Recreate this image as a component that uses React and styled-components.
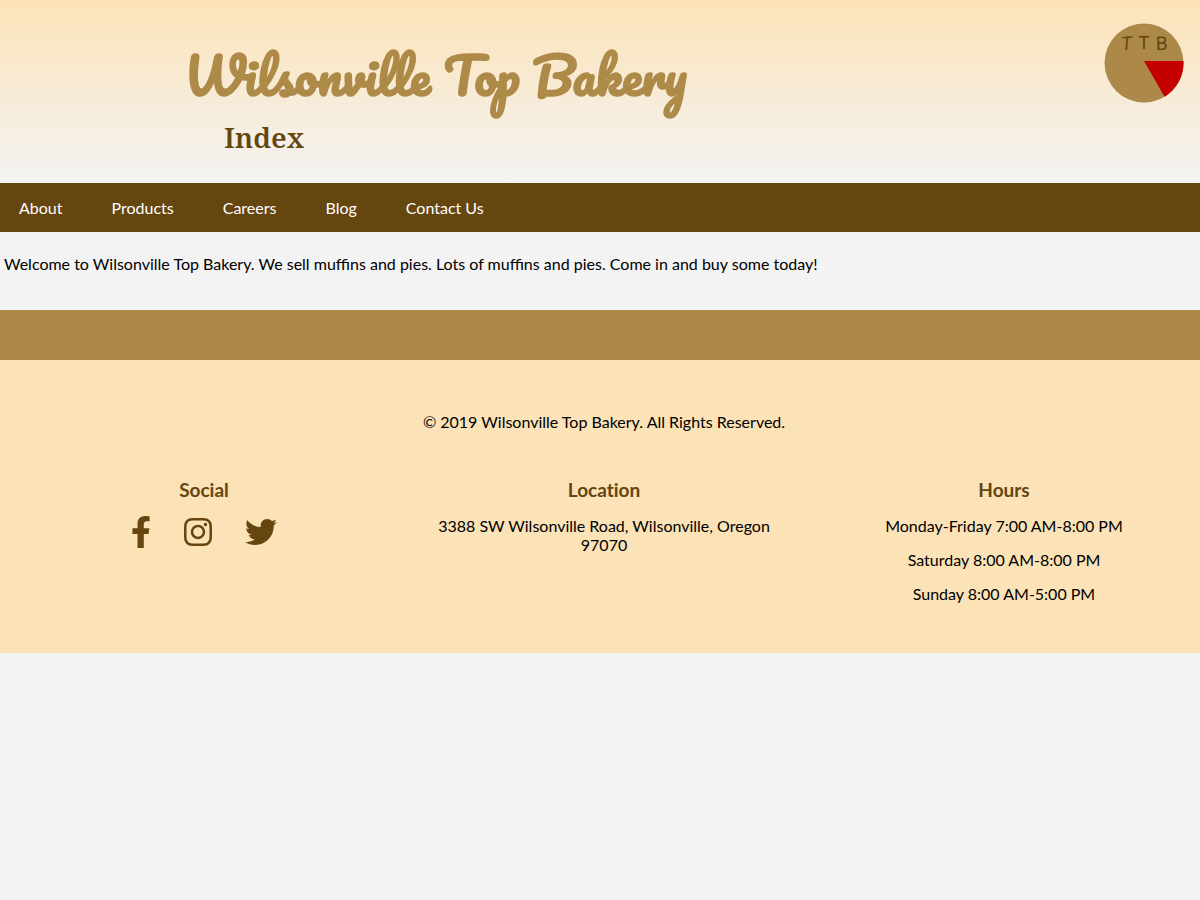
import React from "react";
import styled, { createGlobalStyle } from "styled-components";
import { FaFacebookF, FaInstagram, FaTwitter } from "react-icons/fa";

const GlobalStyle = createGlobalStyle`
  * {
    box-sizing: border-box;
  }
  body {
    margin: 0;
    background: #f3f3f3;
    color: #000;
    font-family: Lato, sans-serif;
    font-size: 16px;
    line-height: 19px;
  }
  h1, h2, h3, p, ul {
    margin: 0;
  }
`;

const Header = styled.header`
  display: flex;
  justify-content: space-between;
  align-items: flex-start;
  padding: 23px 16px 26px 184px;
  background: linear-gradient(#fce3b8, #f3f3f3);
`;

const Title = styled.h1`
  padding-top: 9px;
  color: #ae8a49;
  font-family: Pacifico, cursive;
  font-size: 50px;
  font-weight: 700;
  line-height: 86px;
`;

const PageName = styled.h2`
  padding-left: 40px;
  color: #65460f;
  font-family: "Noto Serif", "DejaVu Serif", serif;
  font-size: 28px;
  font-weight: 600;
  line-height: 39px;
`;

const Logo = styled.svg`
  flex: none;
  width: 80px;
  height: 80px;
`;

const LogoLetter = styled.text`
  fill: #65460f;
  font-family: Roboto, sans-serif;
  font-size: 19px;
  text-anchor: middle;
  font-style: ${(p) => (p.$slanted ? "italic" : "normal")};
`;

const Nav = styled.nav`
  display: flex;
  flex-wrap: wrap;
  gap: 0 49px;
  padding: 0 19px;
  background: #65460f;
`;

const NavLink = styled.a`
  padding: 15px 0;
  color: #fff;
  text-decoration: none;
`;

const Main = styled.main`
  padding: 22px 4px 37px;
`;

const Footer = styled.footer`
  border-top: 50px solid #ac8948;
  padding: 52px 0 50px;
  background: #fbe2b7;
  text-align: center;
`;

const Copyright = styled.p`
  padding-left: 8px;
`;

const Columns = styled.div`
  display: grid;
  grid-template-columns: repeat(3, 1fr);
  margin-top: 47px;
`;

const Column = styled.section`
  display: flex;
  flex-direction: column;
  gap: 15px;
  padding: 0 20px 0 28px;
`;

const ColumnTitle = styled.h3`
  color: #65460f;
  font-size: 19px;
  font-variant-ligatures: no-common-ligatures;
  font-weight: 700;
  line-height: 23px;
`;

const SocialLinks = styled.div`
  display: flex;
  justify-content: center;
  gap: 33px;
`;

const SocialLink = styled.a`
  display: flex;
  color: #65460f;

  svg {
    width: ${(p) => p.$width}px;
    height: 32px;
  }
`;

const navItems = ["About", "Products", "Careers", "Blog", "Contact Us"];
const hours = [
  "Monday-Friday 7:00 AM-8:00 PM",
  "Saturday 8:00 AM-8:00 PM",
  "Sunday 8:00 AM-5:00 PM",
];
const social = [
  { name: "Facebook", Icon: FaFacebookF, width: 20 },
  { name: "Instagram", Icon: FaInstagram, width: 28 },
  { name: "Twitter", Icon: FaTwitter, width: 32 },
];

export default function App() {
  return (
    <>
      <GlobalStyle />
      <Header>
        <div>
          <Title>Wilsonville Top Bakery</Title>
          <PageName>Index</PageName>
        </div>
        <Logo viewBox="0 0 80 80" role="img" aria-label="TTB logo">
          <circle cx="40" cy="40" r="39.5" fill="#ac8948" />
          <path d="M40 38H79.5A39.5 39.5 0 0 1 60.5 73.8Z" fill="#c40000" />
          <LogoLetter $slanted transform="translate(23 27) rotate(-4)">T</LogoLetter>
          <LogoLetter x="40" y="26">T</LogoLetter>
          <LogoLetter transform="translate(58 27) rotate(-2)">B</LogoLetter>
        </Logo>
      </Header>
      <Nav>
        {navItems.map((item) => (
          <NavLink href="#" key={item}>{item}</NavLink>
        ))}
      </Nav>
      <Main>
        <p>
          Welcome to Wilsonville Top Bakery. We sell muffins and pies. Lots of
          muffins and pies. Come in and buy some today!
        </p>
      </Main>
      <Footer>
        <Copyright>© 2019 Wilsonville Top Bakery. All Rights Reserved.</Copyright>
        <Columns>
          <Column>
            <ColumnTitle>Social</ColumnTitle>
            <SocialLinks>
              {social.map(({ name, Icon, width }) => (
                <SocialLink href="#" aria-label={name} $width={width} key={name}>
                  <Icon />
                </SocialLink>
              ))}
            </SocialLinks>
          </Column>
          <Column>
            <ColumnTitle>Location</ColumnTitle>
            <p>3388 SW Wilsonville Road, Wilsonville, Oregon 97070</p>
          </Column>
          <Column>
            <ColumnTitle>Hours</ColumnTitle>
            {hours.map((line) => (
              <p key={line}>{line}</p>
            ))}
          </Column>
        </Columns>
      </Footer>
    </>
  );
}
